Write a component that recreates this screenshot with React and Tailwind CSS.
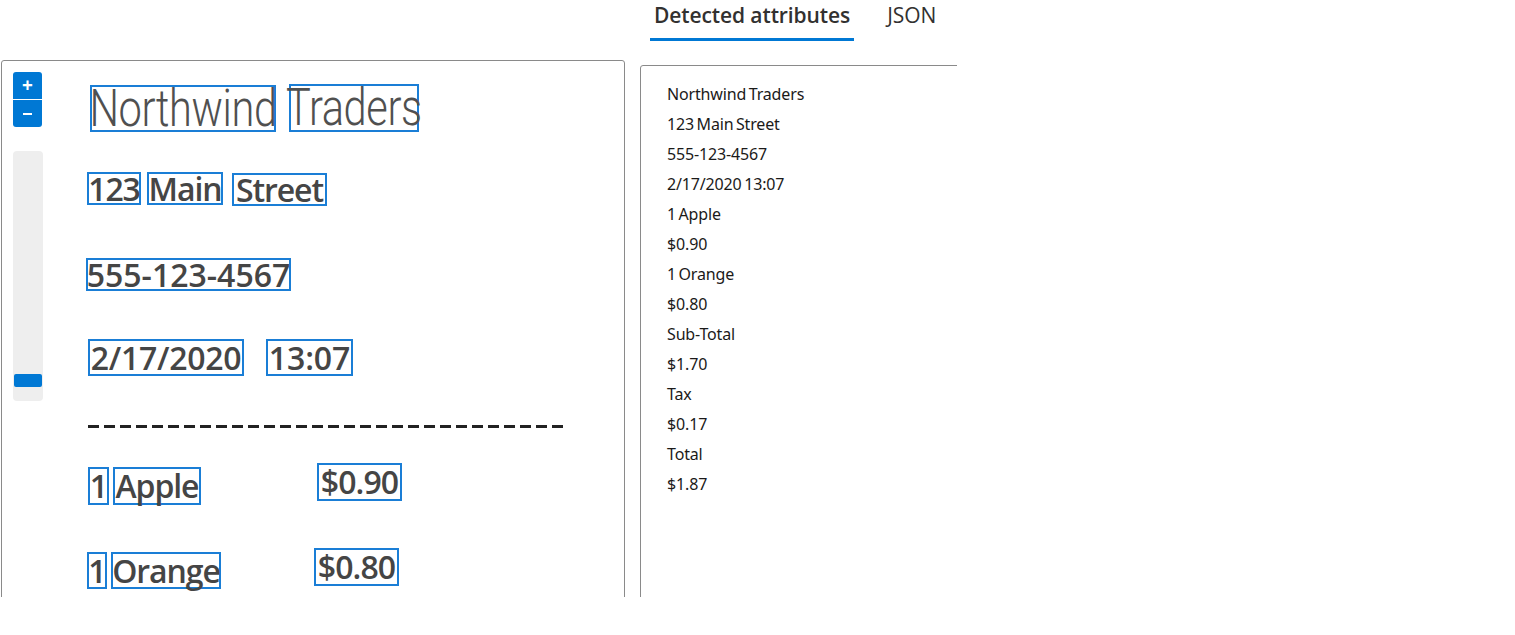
import React from "react";

const BOX = "absolute border-2 border-[#1a7ed6]";

function Word({ x, y, w, h, children }) {
  return (
    <div
      className={`${BOX} flex items-center justify-center overflow-visible whitespace-nowrap`}
      style={{ left: x, top: y, width: w, height: h }}
    >
      {children}
    </div>
  );
}

const RX = "font-['Open_Sans',sans-serif] font-semibold text-[#454545] text-[32px] leading-none";

export default function App() {
  const attrs = [
    "Northwind Traders",
    "123 Main Street",
    "555-123-4567",
    "2/17/2020 13:07",
    "1 Apple",
    "$0.90",
    "1 Orange",
    "$0.80",
    "Sub-Total",
    "$1.70",
    "Tax",
    "$0.17",
    "Total",
    "$1.87",
  ];
  return (
    <div className="w-[1515px] h-[635px] bg-white">
      <div className="w-[957px] h-[597px] overflow-hidden flex">
        {/* Left panel */}
        <div className="ml-[1px] mt-[60px] w-[624px] h-[600px] shrink-0 border border-[#8a8a8a] rounded-[3px] relative">
          {/* zoom controls */}
          <div className="absolute left-[11px] top-[11px] flex flex-col w-[29px]">
            <button className="h-[28px] bg-[#0078d4] text-white rounded-t-[3px] flex items-center justify-center font-['Open_Sans',sans-serif] font-bold text-[19px] leading-none border-b border-white">
              +
            </button>
            <button className="h-[27px] bg-[#0078d4] rounded-b-[3px] flex items-center justify-center">
              <span className="block w-[9px] h-[2px] bg-white" />
            </button>
          </div>
          <div className="absolute left-[11px] top-[90px] w-[30px] h-[250px] bg-[#eeeeee] rounded-[4px]">
            <div className="absolute left-[1px] top-[223px] w-[28px] h-[13px] bg-[#0078d4] rounded-[2px]" />
          </div>

          {/* receipt canvas */}
          <Word x={88} y={24} w={186} h={47}>
            <span className="font-['Roboto',sans-serif] font-light text-[#505050] text-[52px] leading-none inline-block scale-x-[0.80] tracking-[-0.5px]">Northwind</span>
          </Word>
          <Word x={287} y={23} w={130} h={48}>
            <span className="font-['Roboto',sans-serif] font-light text-[#505050] text-[52px] leading-none inline-block scale-x-[0.80] tracking-[-0.5px]">Traders</span>
          </Word>

          <Word x={85} y={111} w={54} h={33}><span className={`${RX} tracking-[-1.1px]`}>123</span></Word>
          <Word x={145} y={111} w={76} h={33}><span className={`${RX} tracking-[-1.1px]`}>Main</span></Word>
          <Word x={230} y={112} w={95} h={33}><span className={`${RX} tracking-[-1.1px]`}>Street</span></Word>

          <Word x={84} y={197} w={205} h={33}><span className={`${RX} tracking-[0px]`}>555-123-4567</span></Word>

          <Word x={86} y={278} w={156} h={37}><span className={`${RX} tracking-[-0.3px]`}>2/17/2020</span></Word>
          <Word x={264} y={278} w={87} h={37}><span className={`${RX} tracking-[-0.1px]`}>13:07</span></Word>

          <div className="absolute left-[86px] top-[364px] w-[480px] h-[3px] bg-[repeating-linear-gradient(90deg,#222_0px,#222_11px,transparent_11px,transparent_16px)]" />

          <Word x={86} y={406} w={21} h={38}><span className={`${RX} tracking-[-1px]`}>1</span></Word>
          <Word x={111} y={406} w={88} h={38}><span className={`${RX} tracking-[-1.1px]`}>Apple</span></Word>
          <Word x={315} y={402} w={85} h={38}><span className={`${RX} tracking-[-0.9px]`}>$0.90</span></Word>

          <Word x={85} y={491} w={20} h={37}><span className={`${RX} tracking-[-1px]`}>1</span></Word>
          <Word x={109} y={491} w={110} h={37}><span className={`${RX} tracking-[-1.1px]`}>Orange</span></Word>
          <Word x={312} y={487} w={85} h={38}><span className={`${RX} tracking-[-0.9px]`}>$0.80</span></Word>
        </div>

        {/* Right column */}
        <div className="ml-[15px] flex flex-col shrink-0">
          <div className="flex items-start h-[42px] ml-[10px] gap-[29px] font-['Open_Sans',sans-serif] shrink-0">
            <div className="flex flex-col">
              <div className="px-[4px] pt-[1px] h-[38px] text-[21px] font-semibold text-[#323130] leading-[28px] tracking-[-0.1px]">
                Detected attributes
              </div>
              <div className="h-[3px] bg-[#0078d4]" />
            </div>
            <div className="px-[4px] pt-[1px] h-[38px] text-[21px] text-[#323130] leading-[28px]">JSON</div>
          </div>
          <div className="mt-[23px] w-[330px] h-[600px] shrink-0 border border-[#8a8a8a] rounded-[3px] pl-[26px] pt-[13px] font-['Noto_Sans',sans-serif] text-[16px] text-[#1b1a19] leading-[30px] tracking-[-0.15px] [word-spacing:-1.5px]">
            {attrs.map((a, i) => (
              <div key={i}>{a}</div>
            ))}
          </div>
        </div>
      </div>
    </div>
  );
}
